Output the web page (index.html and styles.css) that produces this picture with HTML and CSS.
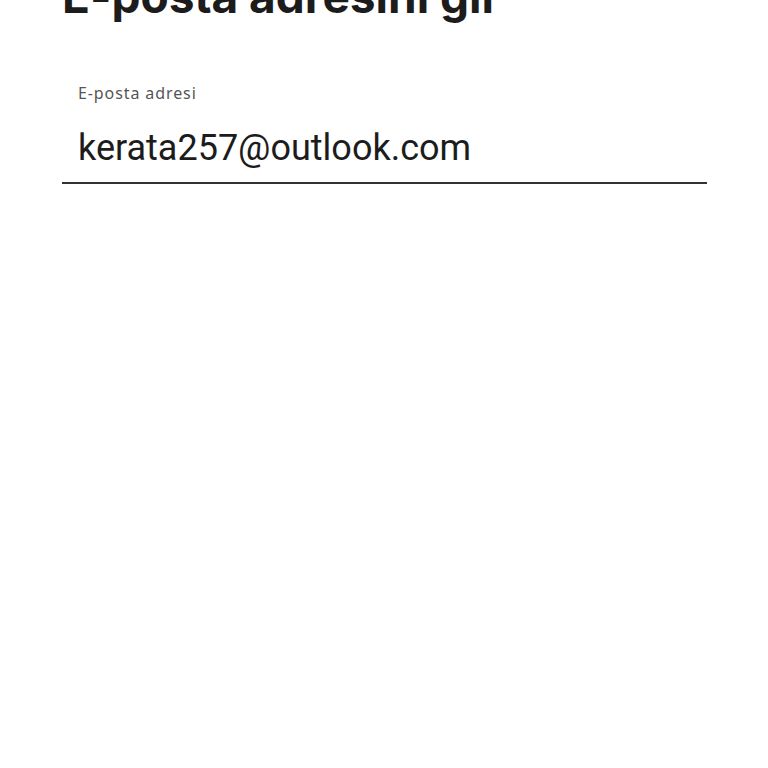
FILE: index.html
```html
<!DOCTYPE html>
<html lang="tr">
<head>
    <meta charset="UTF-8">
    <meta name="viewport" content="width=device-width, initial-scale=1.0">
    <title>E-posta adresini gir</title>
    <link rel="stylesheet" href="styles.css">
</head>
<body>

    <div id="email-step">
        <h1>E-posta adresini gir</h1>

        <div class="field">
            <label for="email">E-posta adresi</label>
            <input type="email" id="email" value="kerata257@outlook.com">
        </div>
    </div>

</body>
</html>
```

FILE: styles.css
```css
body {
    font-family: "Inter", "Noto Sans", sans-serif;
    background-color: #ffffff;
    color: #1c1c1c;
    margin: 0;
    padding: 0;
}
#email-step {
    padding: 0 61px 0 62px;
}
h1 {
    font-size: 46px;
    font-weight: 700;
    line-height: 56px;
    margin: -32px 0 0 0;
}
.field {
    margin-top: 59px;
    display: flex;
    flex-direction: column;
}
label {
    font-family: "Noto Sans", sans-serif;
    font-size: 16px;
    letter-spacing: 0.9px;
    color: #555555;
    padding-left: 16px;
    line-height: 20px;
}
input[type="email"] {
    font-family: "Roboto", sans-serif;
    font-size: 36px;
    line-height: 42px;
    color: #1c1c1c;
    padding: 24px 16px 13px 16px;
    margin: 0;
    border: none;
    border-bottom: 2px solid #333333;
    outline: none;
    background: transparent;
}
```
